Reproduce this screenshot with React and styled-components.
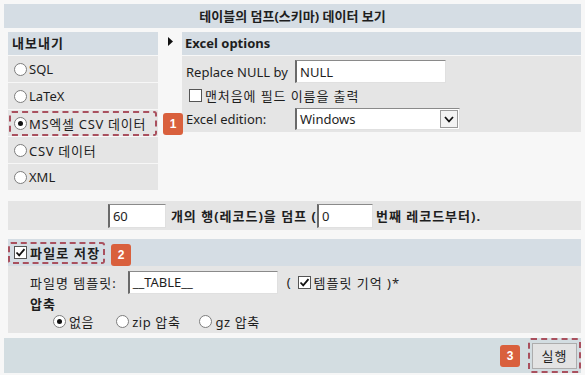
import React from "react";
import styled, { createGlobalStyle, css } from "styled-components";

const Global = createGlobalStyle`
  html, body { margin: 0; padding: 0; background: #f7f7f7; }
  body {
    font-family: "Noto Sans", "Noto Sans CJK KR", sans-serif;
    font-size: 13px;
    color: #1e1e1e;
  }
  * { box-sizing: border-box; }
`;

const Page = styled.div`
  width: 585px;
  height: 375px;
  padding: 4px 4px 0 4px;
  display: flex;
  flex-direction: column;
`;

const TitleBar = styled.div`
  height: 24px;
  background: #d5dde4;
  text-align: center;
  line-height: 24px;
  font-weight: 700;
  font-size: 13px;
`;

const ExportArea = styled.div`
  display: flex;
  margin-top: 4px;
  padding-left: 4px;
  position: relative;
`;

const LeftPanel = styled.div`
  width: 150px;
  display: flex;
  flex-direction: column;
  gap: 1px;
`;

const PanelHeader = styled.div`
  height: 23px;
  background: #d5dde4;
  line-height: 23px;
  padding-left: ${(p) => p.$pad || 4}px;
  font-weight: 700;
  letter-spacing: ${(p) => p.$ls || 0}px;
`;

const OptionRow = styled.div`
  height: 26px;
  background: #e5e5e5;
  display: flex;
  align-items: center;
  padding-left: 6px;
  gap: 2px;
  position: relative;
  letter-spacing: ${(p) => p.$ls}px;
  ${(p) =>
    p.$highlight &&
    css`
      &::after {
        content: "";
        position: absolute;
        inset: 1px 1px 0 1px;
        border: 2px dashed #a9505e;
        border-radius: 3px;
      }
    `}
`;

const ArrowCol = styled.div`
  width: 24px;
  display: flex;
  justify-content: center;
  padding-top: 5px;
`;

const RightPanel = styled.div`
  width: 399px;
  align-self: flex-start;
`;

const RightBody = styled.div`
  background: #e5e5e5;
  margin-top: 1px;
  padding: 4px 0 2px 4px;
  display: grid;
  grid-template-columns: 109px auto;
  align-items: center;
  row-gap: 3px;
`;

const FullRow = styled.div`
  grid-column: 1 / -1;
  display: flex;
  align-items: center;
  gap: 3px;
  padding-left: 3px;
  letter-spacing: 0.9px;
`;

const TextInput = styled.div`
  width: ${(p) => p.$w}px;
  height: ${(p) => p.$h || 23}px;
  margin: 0 ${(p) => p.$mr || 0}px 0 ${(p) => p.$ml || 0}px;
  background: #fff;
  border-style: solid;
  border-width: 1px 1px 1px 2px;
  border-color: #8a8a8a #e0e0e0 #e0e0e0 #6a6a6a;
  padding-left: 3px;
  display: flex;
  align-items: center;
  font-weight: 400;
  font-size: 13px;
  letter-spacing: 0;
  flex-shrink: 0;
`;

const Select = styled.div`
  width: 165px;
  height: 22px;
  background: #fff;
  border-style: solid;
  border-width: 1px 1px 1px 2px;
  border-color: #8a8a8a #e0e0e0 #e0e0e0 #6a6a6a;
  display: flex;
  align-items: center;
  justify-content: space-between;
  padding-left: 3px;
`;

const SelectButton = styled.div`
  width: 18px;
  height: 18px;
  margin-right: 1px;
  border: 1px solid #9a9a9a;
  background: #f3f3f3;
  display: flex;
  align-items: center;
  justify-content: center;
`;

const RadioCircle = styled.span`
  width: 13px;
  height: 13px;
  border-radius: 50%;
  border: 1px solid #7d7d7d;
  background: #fff;
  display: inline-flex;
  align-items: center;
  justify-content: center;
  flex-shrink: 0;
  &::after {
    content: "";
    width: 5px;
    height: 5px;
    border-radius: 50%;
    background: ${(p) => (p.$checked ? "#111" : "transparent")};
  }
`;

const Box = styled.span`
  width: 13px;
  height: 13px;
  margin-left: ${(p) => p.$ml || 0}px;
  border: 1px solid #555;
  background: #fff;
  display: inline-flex;
  align-items: center;
  justify-content: center;
  flex-shrink: 0;
`;

const RowsBar = styled.div`
  margin: 11px 0 0 4px;
  height: 29px;
  background: #e5e5e5;
  display: flex;
  align-items: center;
  justify-content: center;
  font-weight: 700;
  letter-spacing: 1px;
`;

const FileSection = styled.div`
  margin: 9px 0 0 4px;
`;

const FileHeader = styled.div`
  height: 27px;
  background: #d5dde4;
  display: flex;
  align-items: center;
  position: relative;
`;

const Highlight = styled.div`
  display: flex;
  align-items: center;
  gap: 3px;
  padding: 0 3px 0 4px;
  height: 22px;
  border: 2px dashed #a9505e;
  border-radius: 3px;
  font-weight: 700;
  letter-spacing: 1.2px;
`;

const FileBody = styled.div`
  background: #e5e5e5;
  padding: 4px 0 2px 22px;
  display: flex;
  flex-direction: column;
`;

const Line = styled.div`
  display: flex;
  align-items: center;
  height: ${(p) => p.$h || 22}px;
  padding-left: ${(p) => p.$pl || 0}px;
  font-weight: ${(p) => (p.$bold ? 700 : 400)};
  letter-spacing: ${(p) => p.$ls ?? 1}px;
`;

const Choice = styled.label`
  display: inline-flex;
  align-items: center;
  gap: 3px;
  margin-right: ${(p) => p.$mr || 0}px;
`;

const BottomBar = styled.div`
  margin-top: 5px;
  height: 35px;
  background: #d3dde1;
  display: flex;
  align-items: center;
  justify-content: flex-end;
  gap: 8px;
`;

const ButtonFrame = styled.div`
  border: 2px dashed #a9505e;
  border-radius: 3px;
  padding: 2px;
  height: 35px;
  display: flex;
  align-items: center;
`;

const Button = styled.div`
  width: 45px;
  height: 26px;
  background: #e3e3e3;
  border: 1px solid #adadad;
  display: flex;
  align-items: center;
  justify-content: center;
  font-size: 13px;
  letter-spacing: 1px;
`;

const Badge = styled.span`
  width: 20px;
  height: 22px;
  border-radius: 3px;
  background: #d9603d;
  color: #fff;
  font-weight: 700;
  font-size: 12px;
  display: inline-flex;
  align-items: center;
  justify-content: center;
  font-family: "Liberation Sans", sans-serif;
  letter-spacing: 0;
  ${(p) =>
    p.$abs &&
    css`
      position: absolute;
      left: ${p.$x}px;
      top: ${p.$y}px;
    `}
`;

const Check = () => (
  <svg width="11" height="11" viewBox="0 0 11 11">
    <path d="M1.5 5.5 L4.2 8.3 L9.5 2.2" fill="none" stroke="#111" strokeWidth="1.8" />
  </svg>
);

const Radio = ({ checked, children, mr }) => (
  <Choice $mr={mr}>
    <RadioCircle $checked={checked} />
    {children}
  </Choice>
);

const formats = [
  { label: "SQL", ls: 0 },
  { label: "LaTeX", ls: 0 },
  { label: "MS엑셀 CSV 데이터", ls: 0.7 },
  { label: "CSV 데이터", ls: 0.7 },
  { label: "XML", ls: 0 },
];

export default function App() {
  return (
    <>
      <Global />
      <Page>
        <TitleBar>테이블의 덤프(스키마) 데이터 보기</TitleBar>
        <ExportArea>
          <LeftPanel>
            <PanelHeader $pad={4} $ls={1}>내보내기</PanelHeader>
            {formats.map((f, i) => (
              <OptionRow key={f.label} $ls={f.ls} $highlight={i === 2}>
                <RadioCircle $checked={i === 2} />
                {f.label}
              </OptionRow>
            ))}
          </LeftPanel>
          <ArrowCol>
            <svg width="7" height="9" viewBox="0 0 7 9">
              <path d="M1 0 L6 4.5 L1 9 Z" fill="#111" />
            </svg>
          </ArrowCol>
          <RightPanel>
            <PanelHeader $pad={3}>Excel options</PanelHeader>
            <RightBody>
              <span>Replace NULL by</span>
              <TextInput $w={151}>NULL</TextInput>
              <FullRow>
                <Box />
                맨처음에 필드 이름을 출력
              </FullRow>
              <span>Excel edition:</span>
              <Select>
                Windows
                <SelectButton>
                  <svg width="10" height="7" viewBox="0 0 10 7">
                    <path d="M1 1 L5 5.5 L9 1" fill="none" stroke="#111" strokeWidth="1.8" />
                  </svg>
                </SelectButton>
              </Select>
            </RightBody>
          </RightPanel>
          <Badge $abs $x={159} $y={81}>1</Badge>
        </ExportArea>
        <RowsBar>
          <TextInput $w={58} $h={24} $mr={5}>60</TextInput>
          <span>개의 행(레코드)을 덤프 (</span>
          <TextInput $w={56} $h={24} $mr={3}>0</TextInput>
          <span>번째 레코드부터).</span>
        </RowsBar>
        <FileSection>
          <FileHeader>
            <Highlight>
              <Box>
                <Check />
              </Box>
              파일로 저장
            </Highlight>
            <Badge $abs $x={103} $y={5}>2</Badge>
          </FileHeader>
          <FileBody>
            <Line $h={24}>
              <span>파일명 템플릿:</span>
              <TextInput $w={150} $h={23} $ml={11} $mr={9}>__TABLE__</TextInput>
              <Choice>
                (
                <Box $ml={3}>
                  <Check />
                </Box>
                템플릿 기억 )*
              </Choice>
            </Line>
            <Line $bold $h={18}>압축</Line>
            <Line $pl={23} $h={19} $ls={0.6}>
              <Radio checked mr={22}>없음</Radio>
              <Radio mr={19}>zip 압축</Radio>
              <Radio>gz 압축</Radio>
            </Line>
          </FileBody>
        </FileSection>
        <BottomBar>
          <Badge>3</Badge>
          <ButtonFrame>
            <Button>실행</Button>
          </ButtonFrame>
        </BottomBar>
      </Page>
    </>
  );
}
